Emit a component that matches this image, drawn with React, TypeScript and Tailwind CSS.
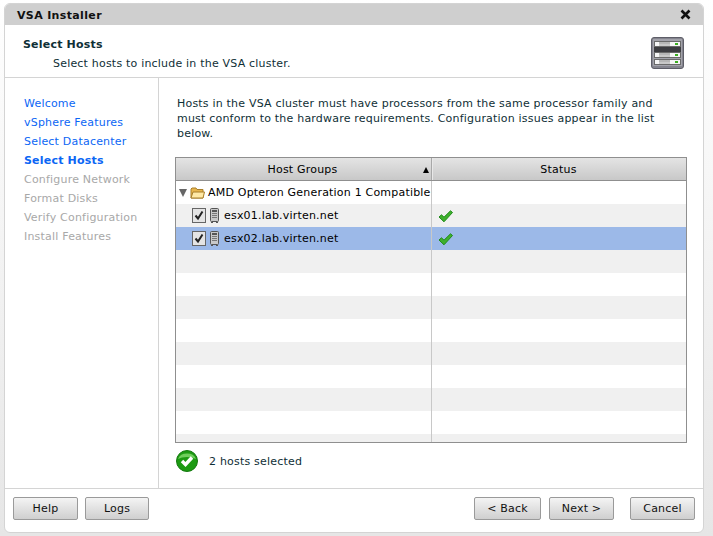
const steps = [
  { label: 'Welcome', state: 'done' },
  { label: 'vSphere Features', state: 'done' },
  { label: 'Select Datacenter', state: 'done' },
  { label: 'Select Hosts', state: 'active' },
  { label: 'Configure Network', state: 'todo' },
  { label: 'Format Disks', state: 'todo' },
  { label: 'Verify Configuration', state: 'todo' },
  { label: 'Install Features', state: 'todo' },
];

function ServerIcon() {
  return (
    <svg width="33" height="32" viewBox="0 0 33 32">
      <rect x="0.5" y="0.5" width="32" height="31" rx="2.5" fill="#85858f" stroke="#5e5e68" />
      <rect x="2" y="2" width="29" height="27" fill="#a2a2aa" />
      <rect x="3" y="10" width="27" height="5" fill="#3c3c40" />
      {[4, 15, 22].map((y) => (
        <g key={y}>
          <rect x="3.5" y={y + 0.5} width="26" height="5" fill="#f6f6f6" stroke="#6a6a6a" />
          <rect x="8" y={y + 1.5} width="11" height="1" fill="#777" />
          <rect x="8" y={y + 3.5} width="11" height="1" fill="#999" />
          <rect x="24" y={y + 2} width="3" height="2" fill="#3cb021" />
        </g>
      ))}
    </svg>
  );
}

function GreenCheck() {
  return (
    <svg width="15" height="13" viewBox="0 0 15 13">
      <path d="M1 7 L3.5 4.8 L6 7.2 L12.5 0.8 L14.5 2.5 L6 11.8 Z" fill="#3fb02c" stroke="#1f8a1a" strokeWidth="1" strokeLinejoin="round" />
    </svg>
  );
}

function HostCheckbox() {
  return (
    <svg width="14" height="15" viewBox="0 0 14 15">
      <rect x="0.5" y="0.5" width="13" height="14" fill="#e4e4e4" stroke="#666" />
      <path d="M3.5 7.5 L6 10.5 L10.5 3.5" fill="none" stroke="#222" strokeWidth="2" />
    </svg>
  );
}

function HostIcon() {
  return (
    <svg width="11" height="15" viewBox="0 0 11 15">
      <rect x="1.5" y="0.5" width="8" height="13" rx="1" fill="#c8c8c8" stroke="#555" />
      <rect x="3" y="2" width="5" height="2" fill="#555" />
      <rect x="3" y="5" width="5" height="1" fill="#777" />
      <rect x="3" y="7" width="5" height="1" fill="#777" />
      <rect x="3" y="9" width="5" height="1" fill="#777" />
      <rect x="2" y="14" width="2" height="1" fill="#555" />
      <rect x="7" y="14" width="2" height="1" fill="#555" />
    </svg>
  );
}

function FolderIcon() {
  return (
    <svg width="15" height="12" viewBox="0 0 15 12">
      <path d="M1 11 V2 L2 1 H6 L7 2.5 H13 V11 Z" fill="#e8b64e" stroke="#a87f2a" />
      <path d="M1 11 L3 5 H14.5 L13 11 Z" fill="#ffe9a6" stroke="#a87f2a" />
    </svg>
  );
}

function HostRow({ name, selected }: { name: string; selected?: boolean }) {
  return (
    <div className={`flex h-[23px] ${selected ? 'bg-[#9cb9e8]' : 'bg-[#f0f0f0]'}`}>
      <div className="flex w-[256px] items-center border-r border-[#c8c8c8] pl-[16px]">
        <HostCheckbox />
        <span className="ml-[3px] flex"><HostIcon /></span>
        <span className="ml-[4px] text-black">{name}</span>
      </div>
      <div className="flex flex-1 items-center pl-[6px] pt-[2px]">
        <GreenCheck />
      </div>
    </div>
  );
}

function Button({ label, width }: { label: string; width: string }) {
  return (
    <button className={`h-[23px] ${width} rounded-[2px] border border-[#9a9a9a] bg-gradient-to-b from-[#f4f4f4] to-[#cfcfcf] text-[#111]`}>
      {label}
    </button>
  );
}

export default function App() {
  return (
    <div className="h-[536px] w-[713px] bg-gradient-to-b from-white to-[#e6e6e6] pl-[4px] pr-[9px] pt-[3px] font-['DejaVu_Sans',Verdana,sans-serif] text-[11px] leading-[15px] tracking-[0.2px] text-[#0f2f36]">
      <div className="flex h-[530px] flex-col overflow-hidden rounded-[6px] border border-[#d4d4d4] bg-white">
        {/* Title bar */}
        <div className="flex h-[21px] shrink-0 items-center justify-between bg-[#cfcfcf] pl-[12px] pr-[12px]">
          <span className="pt-[1px] font-bold tracking-[0.35px] text-[#111]">VSA Installer</span>
          <svg width="11" height="11" viewBox="0 0 11 11">
            <path d="M1.5 1.5 L9.5 9.5 M9.5 1.5 L1.5 9.5" stroke="#111" strokeWidth="2.6" />
          </svg>
        </div>

        {/* Page heading */}
        <div className="flex h-[53px] shrink-0 items-start justify-between border-b border-[#d4d4d4] pl-[18px] pr-[19px] pt-[12px]">
          <div>
            <div className="font-bold">Select Hosts</div>
            <div className="mt-[4px] pl-[30px]">Select hosts to include in the VSA cluster.</div>
          </div>
          <div className="flex">
            <ServerIcon />
          </div>
        </div>

        <div className="flex flex-1">
          {/* Steps */}
          <div className="flex w-[154px] shrink-0 flex-col gap-[4px] border-r border-[#d4d4d4] pl-[19px] pt-[18px]">
            {steps.map((s) => (
              <div
                key={s.label}
                className={
                  s.state === 'done'
                    ? 'text-[#0b66f5]'
                    : s.state === 'active'
                      ? 'font-bold text-[#0b66f5]'
                      : 'text-[#a8a8a8]'
                }
              >
                {s.label}
              </div>
            ))}
          </div>

          <div className="flex-1 pl-[16px] pr-[17px] pt-[18px]">
            <p className="pl-[2px] pr-[16px]">
              Hosts in the VSA cluster must have processors from the same processor family and must conform to the
              hardware requirements. Configuration issues appear in the list below.
            </p>

            {/* Host table */}
            <div className="mt-[16px] h-[286px] w-[512px] overflow-hidden border border-[#8f8f8f] text-black">
              <div className="flex h-[23px] border-b border-[#8f8f8f] bg-gradient-to-b from-[#e4e4e4] to-[#c8c8c8]">
                <div className="relative flex w-[256px] items-center justify-center border-r border-[#a8a8a8] pr-[2px]">
                  Host Groups
                  <span className="absolute right-[2px] top-[9px] h-0 w-0 border-x-[3px] border-b-[6px] border-x-transparent border-b-black" />
                </div>
                <div className="flex flex-1 items-center justify-center border-l border-[#e8e8e8] pr-[2px]">Status</div>
              </div>
              <div className="flex h-[23px]">
                <div className="flex w-[256px] items-center overflow-hidden border-r border-[#c8c8c8] pl-[3px]">
                  <span className="h-0 w-0 shrink-0 border-x-[4px] border-t-[8px] border-x-transparent border-t-[#666]" />
                  <span className="ml-[3px] flex shrink-0"><FolderIcon /></span>
                  <span className="ml-[3px] whitespace-nowrap">AMD Opteron Generation 1 Compatible</span>
                </div>
              </div>
              <HostRow name="esx01.lab.virten.net" />
              <HostRow name="esx02.lab.virten.net" selected />
              {[0, 1, 2, 3, 4, 5, 6, 7, 8].map((i) => (
                <div key={i} className={`flex h-[23px] ${i % 2 === 0 ? 'bg-[#f0f0f0]' : 'bg-white'}`}>
                  <div className="w-[256px] border-r border-[#c8c8c8]" />
                </div>
              ))}
            </div>

            <div className="mt-[7px] flex items-center pl-[1px]">
              <svg width="22" height="22" viewBox="0 0 22 22">
                <circle cx="11" cy="11" r="10.5" fill="#1c9a12" stroke="#157a10" />
                <path d="M2 9 A9.5 8 0 0 1 20 9 A12 6 0 0 0 2 9 Z" fill="#6fce5c" />
                <path d="M6 11 L9.5 14.5 L16 7.5" fill="none" stroke="#fff" strokeWidth="3.4" />
              </svg>
              <span className="ml-[11px]">2 hosts selected</span>
            </div>
          </div>
        </div>

        {/* Footer */}
        <div className="flex h-[44px] shrink-0 items-start justify-between border-t border-[#d4d4d4] pl-[8px] pr-[8px] pt-[8px]">
          <div className="flex gap-[7px]">
            <Button label="Help" width="w-[65px]" />
            <Button label="Logs" width="w-[64px]" />
          </div>
          <div className="flex">
            <Button label="< Back" width="w-[67px]" />
            <span className="ml-[8px]"><Button label="Next >" width="w-[65px]" /></span>
            <span className="ml-[16px]"><Button label="Cancel" width="w-[65px]" /></span>
          </div>
        </div>
      </div>
    </div>
  );
}
